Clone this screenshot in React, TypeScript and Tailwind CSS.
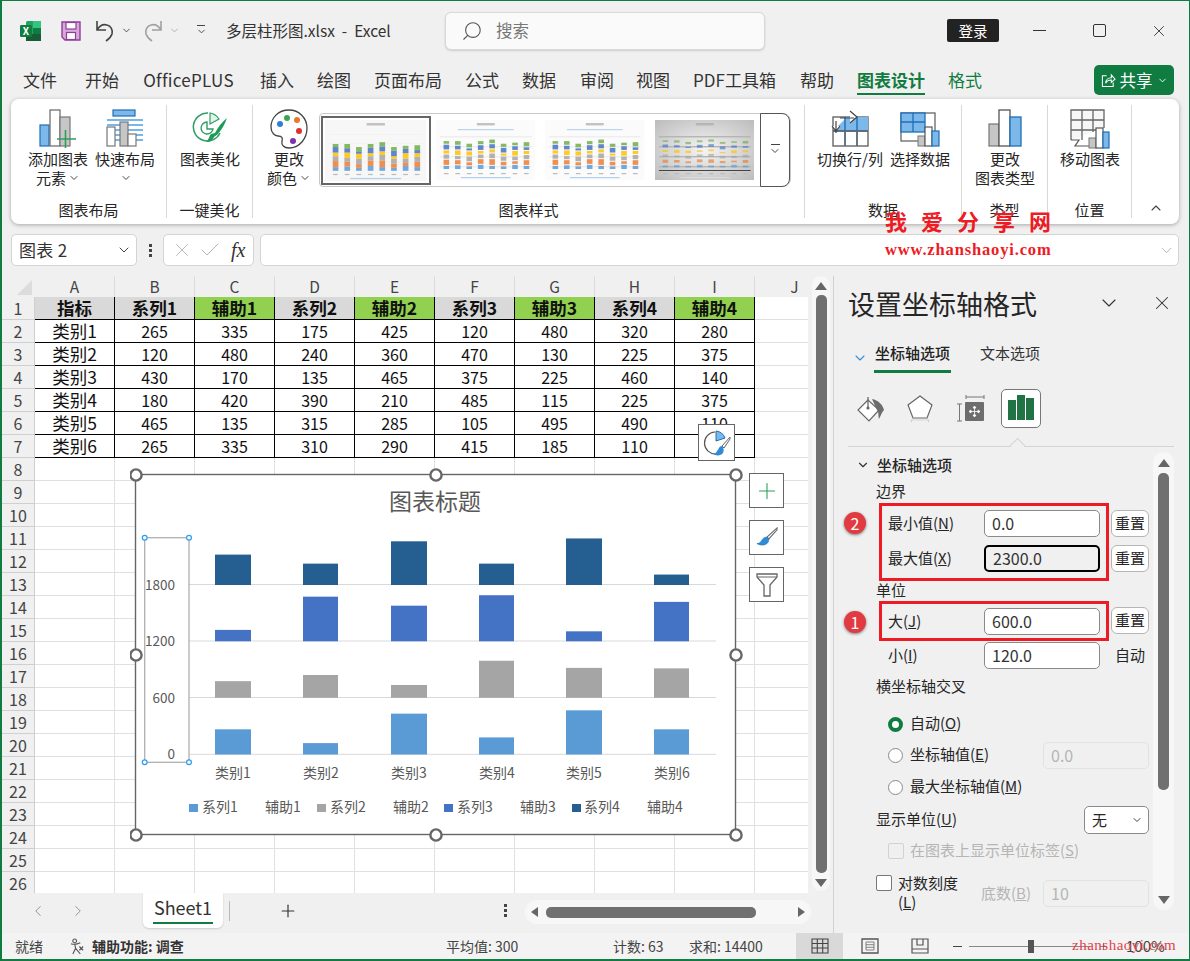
import { ChevronDown, ChevronLeft, ChevronRight, ChevronUp, Plus, Search, X, Check } from 'lucide-react';
import type { ReactNode } from 'react';

const tableHead = ['指标', '系列1', '辅助1', '系列2', '辅助2', '系列3', '辅助3', '系列4', '辅助4'];
const tableRows = [
  ['类别1', '265', '335', '175', '425', '120', '480', '320', '280'],
  ['类别2', '120', '480', '240', '360', '470', '130', '225', '375'],
  ['类别3', '430', '170', '135', '465', '375', '225', '460', '140'],
  ['类别4', '180', '420', '390', '210', '485', '115', '225', '375'],
  ['类别5', '465', '135', '315', '285', '105', '495', '490', '110'],
  ['类别6', '265', '335', '310', '290', '415', '185', '110', '490'],
];
const colLetters = ['A', 'B', 'C', 'D', 'E', 'F', 'G', 'H', 'I', 'J'];

const tabs = [
  { t: '文件', c: 'ml-[21px] w-[34px]' },
  { t: '开始', c: 'ml-[28px] w-[33px]' },
  { t: 'OfficePLUS', c: 'ml-[25px] w-[91px] tracking-[0.3px]' },
  { t: '插入', c: 'ml-[26px] w-[34px]' },
  { t: '绘图', c: 'ml-[23px] w-[34px]' },
  { t: '页面布局', c: 'ml-[23px] w-[67px]' },
  { t: '公式', c: 'ml-[24px] w-[34px]' },
  { t: '数据', c: 'ml-[23px] w-[34px]' },
  { t: '审阅', c: 'ml-[24px] w-[33px]' },
  { t: '视图', c: 'ml-[23px] w-[34px]' },
  { t: 'PDF工具箱', c: 'ml-[23px] w-[83px]' },
  { t: '帮助', c: 'ml-[24px] w-[33px]' },
];

const series = [
  { color: '#5b9bd5', base: 754.5, values: [265, 120, 430, 180, 465, 265] },
  { color: '#a5a5a5', base: 697.8, values: [175, 240, 135, 390, 315, 310] },
  { color: '#4472c4', base: 641.3, values: [120, 470, 375, 485, 105, 415] },
  { color: '#255e91', base: 585, values: [320, 225, 460, 225, 490, 110] },
];
const barX = [215, 303, 391, 479, 566, 654];
const handles = [
  [136, 475], [436, 475], [736, 475], [136, 655], [736, 655], [136, 835], [436, 835], [736, 835],
];
const legend = [
  { t: '系列1', x: 202, sq: '#5b9bd5', sx: 189 },
  { t: '辅助1', x: 265 },
  { t: '系列2', x: 330, sq: '#a5a5a5', sx: 317 },
  { t: '辅助2', x: 393 },
  { t: '系列3', x: 457, sq: '#4472c4', sx: 444 },
  { t: '辅助3', x: 520 },
  { t: '系列4', x: 584, sq: '#255e91', sx: 572 },
  { t: '辅助4', x: 647 },
];

const ExcelLogo = () => (
  <div className="relative h-[20px] w-[21px] shrink-0">
    <svg viewBox="0 0 21 20" className="absolute inset-0 h-full w-full">
      <rect x="6" y="0" width="15" height="20" rx="1.5" fill="#21a366" />
      <rect x="13" y="0" width="8" height="7" fill="#33c481" />
      <rect x="13" y="7" width="8" height="6" fill="#107c41" />
      <rect x="6" y="13" width="15" height="7" fill="#185c37" />
      <rect x="0" y="4" width="12" height="12" rx="1.2" fill="#107c41" />
    </svg>
    <span className="absolute left-0 top-[4px] w-[12px] text-center text-[10px] font-bold leading-[12px] text-white">X</span>
  </div>
);

const SaveIcon = () => (
  <svg viewBox="0 0 20 20" className="h-[20px] w-[20px] shrink-0">
    <path d="M1 1h18v18H4l-3-3z" fill="#d8a9d8" stroke="#8f3f9b" strokeWidth="1.4" />
    <rect x="5" y="1.5" width="10" height="6.5" fill="#fff" stroke="#8f3f9b" strokeWidth="1.2" />
    <rect x="5.5" y="11.5" width="9" height="7" fill="#fff" stroke="#8f3f9b" strokeWidth="1.2" />
  </svg>
);

const UndoArrow = ({ color, flip }: { color: string; flip?: boolean }) => (
  <svg viewBox="0 0 20 22" className={`h-[22px] w-[20px] shrink-0 ${flip ? '-scale-x-100' : ''}`}>
    <path d="M2 1v9h9M2 10C5 5 9 4 12 5c4 1 6 5 5 9-1 3-3 5-6 7" fill="none" stroke={color} strokeWidth="1.6" />
  </svg>
);

const AddChartIcon = () => (
  <svg viewBox="0 0 38 40" className="h-[40px] w-[38px]">
    <rect x="1" y="16" width="9" height="21" fill="#7cb8ea" stroke="#1f6fb5" strokeWidth="1.2" />
    <rect x="11" y="1" width="10" height="36" fill="#fff" stroke="#666" strokeWidth="1.2" />
    <rect x="21" y="8" width="10" height="29" fill="#c6c6c6" stroke="#777" strokeWidth="1.2" />
    <path d="M26.5 21v18M18 30h19" stroke="#2e9e5b" strokeWidth="1.6" fill="none" />
  </svg>
);

const QuickLayoutIcon = () => (
  <svg viewBox="0 0 38 40" className="h-[40px] w-[38px]">
    <rect x="7" y="1" width="22" height="6" fill="#7cb8ea" stroke="#1f6fb5" strokeWidth="1.2" />
    <path d="M1 11h36M1 16h36M1 21h36M1 26h36M1 31h36" stroke="#4f9ede" strokeWidth="1.4" />
    <rect x="1" y="18" width="8" height="19" fill="#fff" stroke="#777" strokeWidth="1.2" />
    <rect x="14" y="13" width="8" height="24" fill="#c6c6c6" stroke="#777" strokeWidth="1.2" />
    <rect x="22" y="25" width="8" height="12" fill="#fff" stroke="#777" strokeWidth="1.2" />
  </svg>
);

const BeautifyIcon = () => (
  <svg viewBox="0 0 36 36" className="h-[36px] w-[36px]">
    <path d="M16 4a14 14 0 1 0 12 20" fill="none" stroke="#2f9e63" strokeWidth="1.5" />
    <path d="M15 13a6 6 0 1 0 6 7h-6z" fill="none" stroke="#2f9e63" strokeWidth="1.4" />
    <path d="M18 4a13 13 0 0 1 9 6l-9 5z" fill="#e3f3ea" stroke="#2f9e63" strokeWidth="1.2" />
    <path d="M35 9c-2 6-5 11-9 16l-4 3c-1 3-4 5-8 5 3-2 3-6 5-8l4-1c3-6 7-11 12-15z" fill="#1f9a5a" />
  </svg>
);

const PaletteIcon = () => (
  <svg viewBox="0 0 38 40" className="h-[40px] w-[38px]">
    <path
      d="M19 1C8 1 1 9 1 18c0 6 4 9 7 9 4 0 5 2 4 5-1 4 2 7 7 7 11 0 18-10 18-20S29 1 19 1z"
      fill="#fff"
      stroke="#444"
      strokeWidth="1.3"
    />
    <circle cx="10" cy="15" r="3" fill="#2f7fd1" />
    <circle cx="17" cy="9" r="3" fill="#3aa655" />
    <circle cx="27" cy="11" r="3" fill="#e8782a" />
    <circle cx="29" cy="22" r="3" fill="#e02f2f" />
    <circle cx="23" cy="32" r="3" fill="#7c35a8" />
  </svg>
);

const SwitchIcon = () => (
  <svg viewBox="0 0 38 38" className="h-[38px] w-[38px]">
    <rect x="2" y="8" width="35" height="29" fill="#fff" stroke="#666" strokeWidth="1.4" />
    <path d="M2 37V22L16 8h21v14H2z" fill="#7cb8ea" />
    <path d="M2 22h35M14 8v29M26 8v29" stroke="#1f6fb5" strokeWidth="1.4" />
    <path d="M2 22h35M14 22v15M26 22v15" stroke="#666" strokeWidth="1.3" />
    <path d="M5 24V12M1 17l4 5 4-5M9 9h14M19 2l7 6-7 6" fill="#fff" stroke="#444" strokeWidth="1.2" />
  </svg>
);

const SelectDataIcon = () => (
  <svg viewBox="0 0 40 38" className="h-[38px] w-[40px]">
    <rect x="1" y="4" width="34" height="28" fill="#fff" stroke="#666" strokeWidth="1.3" />
    <rect x="1" y="4" width="24" height="19" fill="#7cb8ea" stroke="#1f6fb5" strokeWidth="1.3" />
    <path d="M13 4v19M1 13h24" stroke="#1f6fb5" strokeWidth="1.3" />
    <rect x="18" y="27" width="7" height="10" fill="#c6c6c6" stroke="#777" />
    <rect x="25" y="18" width="7" height="19" fill="#fff" stroke="#555" strokeWidth="1.2" />
    <rect x="32" y="22" width="7" height="15" fill="#7cb8ea" stroke="#1f6fb5" strokeWidth="1.2" />
  </svg>
);

const ChangeTypeIcon = () => (
  <svg viewBox="0 0 34 38" className="h-[38px] w-[34px]">
    <rect x="1" y="15" width="10" height="22" fill="#c6c6c6" stroke="#777" strokeWidth="1.2" />
    <rect x="11" y="1" width="11" height="36" fill="#fff" stroke="#555" strokeWidth="1.3" />
    <rect x="22" y="8" width="11" height="29" fill="#7cb8ea" stroke="#1f6fb5" strokeWidth="1.3" />
  </svg>
);

const MoveChartIcon = () => (
  <svg viewBox="0 0 40 40" className="h-[40px] w-[40px]">
    <path d="M1 31V1h33v18M1 11h33M1 21h26M12 1v30M23 1v22" fill="#f7f7f7" stroke="#666" strokeWidth="1.3" />
    <path d="M1 31h8l-4 6h14" fill="#fff" stroke="#555" strokeWidth="1.2" />
    <rect x="19" y="29" width="7" height="10" fill="#c6c6c6" stroke="#777" />
    <rect x="26" y="19" width="7" height="20" fill="#fff" stroke="#555" strokeWidth="1.2" />
    <rect x="33" y="23" width="6" height="16" fill="#7cb8ea" stroke="#1f6fb5" strokeWidth="1.2" />
  </svg>
);

const BrushIcon = ({ className }: { className?: string }) => (
  <svg viewBox="0 0 24 24" className={className}>
    <path d="M23 1 12 11l2 2L23 3z" fill="#fff" stroke="#666" strokeWidth="1.1" />
    <path d="M12 11c-3 0-5 2-6 4s-3 3-5 3c3 2 9 3 12-1 1-2 1-3 1-4z" fill="#2f8ad8" stroke="#1f6fb5" strokeWidth="0.6" />
  </svg>
);

const FillIcon = () => (
  <svg viewBox="0 0 28 26" className="h-[26px] w-[28px]">
    <path d="M11 4 1 14l11 11 10-11z" fill="#fff" stroke="#666" strokeWidth="1.2" />
    <path d="M11 1v10" stroke="#666" strokeWidth="1.3" />
    <circle cx="11" cy="12" r="1.6" fill="#666" />
    <path d="M15 3c6 1 11 6 12 11-2 2-3 5-5 9-1-4 0-7-2-9z" fill="#6d6d6d" />
  </svg>
);

const PentagonIcon = () => (
  <svg viewBox="0 0 26 28" className="h-[28px] w-[26px]">
    <path d="m13 1 12 9-5 13H6L1 10z" fill="#fff" stroke="#666" strokeWidth="1.2" />
    <path d="m6 23-2 4M20 23l2 4" stroke="#ccc" strokeWidth="1.2" />
    <path d="M6 24h14l1 2H5z" fill="#e4e4e4" />
  </svg>
);

const SizeIcon = () => (
  <svg viewBox="0 0 28 28" className="h-[28px] w-[28px]">
    <path d="M9 2h18M9 0v4M27 0v4M0 9h5M0 26h5M2.5 9v17" stroke="#777" strokeWidth="1" fill="none" />
    <rect x="8" y="7" width="19" height="19" rx="1" fill="#6d6d6d" />
    <path d="M12 16.5h11M17.5 11v11M12 16.5l2-1.5v3zM23 16.5l-2-1.5v3zM17.5 11l-1.5 2h3zM17.5 22l-1.5-2h3z" stroke="#fff" strokeWidth="0.8" fill="#fff" />
  </svg>
);

const RibbonButton = ({ icon, lines, w, className }: { icon: ReactNode; lines: ReactNode[]; w: string; className?: string }) => (
  <div className={`flex flex-col items-center pt-[4px] ${w} ${className ?? ''}`}>
    <div className="flex h-[40px] items-start justify-center">{icon}</div>
    {lines.map((line, i) => (
      <div key={i} className="flex h-[19px] items-center whitespace-nowrap text-[15px] leading-[19px] text-[#262626]">
        {line}
      </div>
    ))}
  </div>
);

const Group = ({ label, w, children }: { label: string; w: string; children: ReactNode }) => (
  <div className={`flex shrink-0 flex-col border-r border-[#d8d8d8] ${w}`}>
    <div className="flex">{children}</div>
    <div className="mt-auto h-[16px] text-center text-[15px] leading-[16px] text-[#262626]">{label}</div>
  </div>
);

const thumbBars = [
  [6, 10, 8, 6, 9, 5],
  [7, 8, 6, 9, 7, 7],
  [5, 6, 9, 8, 4, 7],
  [8, 9, 7, 5, 9, 6],
  [6, 11, 9, 6, 8, 7],
  [5, 7, 8, 4, 9, 6],
  [8, 5, 7, 9, 7, 5],
  [6, 9, 8, 6, 5, 8],
];
const thumbColors = ['#5b9bd5', '#ed7d31', '#a5a5a5', '#ffc000', '#4472c4', '#70ad47'];

const Thumb = ({ variant, className }: { variant: 1 | 2 | 3 | 4; className: string }) => {
  const gap = variant === 4 ? 2.6 : variant === 1 ? 0 : 1;
  const scale = variant === 1 ? 0.6 : variant === 4 ? 0.32 : 0.52;
  return (
    <svg viewBox="0 0 100 60" preserveAspectRatio="none" className={className}>
      <defs>
        <radialGradient id="thumbGrey" cx="50%" cy="50%" r="70%">
          <stop offset="0%" stopColor="#f4f4f4" />
          <stop offset="100%" stopColor="#bcbcbc" />
        </radialGradient>
      </defs>
      <rect width="100" height="60" fill={variant === 4 ? 'url(#thumbGrey)' : variant === 1 ? '#f7f7f7' : '#fbfbfb'} />
      <rect x="41" y="3" width="18" height="2.4" fill="#aaa" opacity="0.7" />
      {variant !== 1 && variant !== 4 && <rect x="22" y="9" width="56" height="1.2" fill="#9ec4e6" opacity="0.7" />}
      {(variant === 1 ? [14, 23, 32, 41] : [16, 26, 36, 46]).map((y) => (
        <rect key={y} x="4" y={y} width="92" height={variant === 1 ? 0.5 : 1.4} fill={variant === 4 ? '#b5b5b5' : '#eeeeee'} />
      ))}
      {variant === 4 && <rect x="4" y="50" width="92" height="1" fill="#444" />}
      {thumbBars.map((col, i) => {
        let y = 50;
        return (
          <g key={i}>
            {col.map((h, j) => {
              const hh = h * scale;
              y -= hh + gap;
              return (
                <rect key={j} x={7.6 + i * 11.5} y={y} width="5.6" height={hh} fill={thumbColors[j]} opacity={variant === 4 ? 0.65 : 0.85} />
              );
            })}
            <rect x={8 + i * 11.5} y="53" width="4.6" height="1.2" fill="#bbb" />
          </g>
        );
      })}
      <rect x="25" y="57" width="50" height="1.2" fill={variant === 4 ? '#ddd' : '#9ec4e6'} opacity="0.8" />
    </svg>
  );
};

const Chevron = ({ className }: { className?: string }) => (
  <ChevronDown className={className ?? 'ml-[2px] h-[12px] w-[12px]'} strokeWidth={2} color="#444" />
);

const Ribbon = () => (
  <div className="ml-[9px] flex h-[125px] w-[1168px] rounded-[8px] bg-white py-[6px] shadow-[0_1px_4px_rgba(0,0,0,0.3)]">
    <Group label="图表布局" w="w-[156px]">
      <RibbonButton w="w-[60px]" className="ml-[17px]" icon={<AddChartIcon />} lines={['添加图表', <>元素<Chevron /></>]} />
      <RibbonButton w="w-[60px]" className="ml-[7px]" icon={<QuickLayoutIcon />} lines={['快速布局', <Chevron />]} />
    </Group>
    <Group label="一键美化" w="w-[86px]">
      <RibbonButton w="w-[60px]" className="ml-[13px]" icon={<BeautifyIcon />} lines={['图表美化']} />
    </Group>
    <Group label="图表样式" w="w-[552px]">
      <RibbonButton w="w-[48px]" className="ml-[12px]" icon={<PaletteIcon />} lines={['更改', <>颜色<Chevron /></>]} />
      <div className="ml-[6px] mt-[8px] flex h-[74px] w-[472px] items-center rounded-l-[4px] rounded-r-[8px] border border-[#c8c8c8] bg-white">
        <div className="ml-[1px] flex h-[69px] w-[110px] border-2 border-[#666] bg-white p-[2px]">
          <Thumb variant={1} className="h-full w-full" />
        </div>
        <Thumb variant={2} className="ml-[5px] h-[60px] w-[100px]" />
        <Thumb variant={3} className="ml-[10px] h-[60px] w-[100px]" />
        <Thumb variant={4} className="ml-[10px] h-[60px] w-[100px]" />
        <div className="ml-[6px] flex h-[74px] w-[30px] flex-col items-center justify-center rounded-r-[8px] border border-[#555] bg-white">
          <div className="h-[1px] w-[9px] bg-[#444]" />
          <ChevronDown className="h-[12px] w-[12px]" color="#444" />
        </div>
      </div>
    </Group>
    <Group label="数据" w="w-[157px]">
      <RibbonButton w="w-[66px]" className="ml-[12px]" icon={<SwitchIcon />} lines={['切换行/列']} />
      <RibbonButton w="w-[60px]" className="ml-[7px]" icon={<SelectDataIcon />} lines={['选择数据']} />
    </Group>
    <Group label="类型" w="w-[86px]">
      <RibbonButton w="w-[60px]" className="ml-[13px]" icon={<ChangeTypeIcon />} lines={['更改', '图表类型']} />
    </Group>
    <Group label="位置" w="w-[84px]">
      <RibbonButton w="w-[60px]" className="ml-[12px]" icon={<MoveChartIcon />} lines={['移动图表']} />
    </Group>
    <div className="flex flex-1 items-end justify-center pb-[2px]">
      <ChevronUp className="h-[16px] w-[16px]" color="#444" strokeWidth={1.6} />
    </div>
  </div>
);

const SheetCell = ({ children, kind, wide }: { children?: ReactNode; kind?: 'head' | 'aid' | 'data'; wide?: boolean }) => {
  const dark = kind ? 'border-black' : 'border-[#e0e0e0]';
  const fill = kind === 'head' ? 'bg-[#d9d9d9] font-bold' : kind === 'aid' ? 'bg-[#92d050] font-bold' : 'bg-white';
  const size = wide ? 'text-[17.5px]' : 'text-[16px]';
  return (
    <div className={`flex h-[23px] w-[80px] shrink-0 items-center justify-center border-b border-r leading-none text-[#111] ${size} ${dark} ${fill}`}>
      {children}
    </div>
  );
};

const Sheet = () => (
  <div className="h-[617px] w-[806px] shrink-0 overflow-hidden">
    <div className="flex h-[21px] bg-[#f0f0f0]">
      <div className="flex w-[33px] shrink-0 items-end justify-end pb-[2px] pr-[3px]">
        <svg viewBox="0 0 15 15" className="h-[15px] w-[15px]">
          <path d="M15 0v15H0z" fill="#dcdcdc" />
        </svg>
      </div>
      {colLetters.map((c) => (
        <div key={c} className="flex h-[21px] w-[80px] shrink-0 items-center justify-center border-r border-[#dcdcdc] text-[15.5px] leading-none text-[#444]">
          {c}
        </div>
      ))}
    </div>
    {Array.from({ length: 26 }, (_, r) => {
      const row = r === 0 ? tableHead : tableRows[r - 1];
      return (
        <div key={r} className="flex h-[23px]">
          <div className="flex w-[33px] shrink-0 items-center justify-center border-b border-r border-[#cfcfcf] bg-[#f0f0f0] text-[16px] leading-none text-[#444]">
            {r + 1}
          </div>
          {colLetters.map((_, c) => {
            if (!row || c > 8) return <SheetCell key={c} />;
            const kind = r === 0 ? (c > 0 && c % 2 === 0 ? 'aid' : 'head') : 'data';
            return (
              <SheetCell key={c} kind={kind} wide={r === 0 || c === 0}>
                {row[c]}
              </SheetCell>
            );
          })}
        </div>
      );
    })}
  </div>
);

const ChartObject = () => (
  <svg
    viewBox="130 468 616 376"
    className="absolute left-[128px] top-[467px] h-[376px] w-[616px]"
    fontFamily="'Noto Sans CJK SC', sans-serif"
  >
    <rect x="135.5" y="474.5" width="600" height="360" fill="#fff" stroke="#666" strokeWidth="1.4" />
    <text x="435" y="510" textAnchor="middle" fontSize="23" fill="#595959">图表标题</text>
    {[584.5, 641, 697.5, 754.3].map((y) => (
      <line key={y} x1="189" x2="716" y1={y} y2={y} stroke="#d9d9d9" strokeWidth="1" />
    ))}
    {series.map((s) =>
      s.values.map((v, i) => {
        const h = v * 0.095;
        return <rect key={`${s.color}-${i}`} x={barX[i]} y={s.base - h} width={i % 2 ? 35 : 36} height={h} fill={s.color} />;
      }),
    )}
    <rect x="144.7" y="537.7" width="44.3" height="224.6" fill="none" stroke="#b0b0b0" strokeWidth="1.3" />
    {[[144.7, 537.7], [189, 537.7], [144.7, 762.3], [189, 762.3]].map(([x, y]) => (
      <circle key={`${x}-${y}`} cx={x} cy={y} r="2.4" fill="#fff" stroke="#2e9bf0" strokeWidth="1.2" />
    ))}
    {[['1800', 590], ['1200', 646], ['600', 703], ['0', 759]].map(([t, y]) => (
      <text key={t} x="175" y={y} textAnchor="end" fontSize="13.5" fill="#595959">{t}</text>
    ))}
    {barX.map((x, i) => (
      <text key={x} x={x + 18} y="778" textAnchor="middle" fontSize="14" fill="#595959">{`类别${i + 1}`}</text>
    ))}
    {legend.map((l) => (
      <g key={l.t}>
        {l.sq && <rect x={l.sx} y="804" width="9" height="8" fill={l.sq} />}
        <text x={l.x} y="812" fontSize="14" fill="#595959">{l.t}</text>
      </g>
    ))}
    {handles.map(([x, y]) => (
      <circle key={`${x}-${y}`} cx={x} cy={y} r="5.6" fill="#fff" stroke="#666" strokeWidth="2.4" />
    ))}
  </svg>
);

const FloatButton = ({ className, children }: { className: string; children: ReactNode }) => (
  <div className={`absolute flex items-center justify-center border border-[#666] bg-white ${className}`}>{children}</div>
);

const ScrollArrow = ({ up }: { up?: boolean }) => (
  <svg viewBox="0 0 12 8" className="h-[8px] w-[12px] shrink-0">
    <path d={up ? 'M6 0l6 8H0z' : 'M0 0h12L6 8z'} fill="#666" />
  </svg>
);

const Field = ({ value, w = 'w-[116px]', focus, muted }: { value: string; w?: string; focus?: boolean; muted?: boolean }) => (
  <div
    className={`flex h-[27px] shrink-0 items-center rounded-[5px] pb-[1px] pl-[7px] text-[16px] ${w} ${
      focus
        ? 'border-2 border-black bg-[#f0f0f0] text-[#333]'
        : muted
          ? 'border border-[#e2e2e2] bg-[#f0f0f0] text-[#b5b5b5]'
          : 'border border-[#8a8a8a] bg-white text-[#333]'
    }`}
  >
    {value}
  </div>
);

const ResetButton = () => (
  <div className="flex h-[27px] w-[38px] shrink-0 items-center justify-center rounded-[6px] border border-[#b5b5b5] bg-white text-[15px] text-[#262626]">
    重置
  </div>
);

const Hotkey = ({ label, k, className }: { label: string; k: string; className?: string }) => (
  <span className={`inline-block whitespace-nowrap pb-[2px] text-[15px] ${className ?? 'text-[#262626]'}`}>
    {label}(<span className="underline">{k}</span>)
  </span>
);

const Badge = ({ n, className }: { n: number; className: string }) => (
  <div className={`absolute flex h-[22px] w-[22px] items-center justify-center rounded-full bg-[#e13b41] text-[16px] text-white shadow-[0_1px_3px_rgba(0,0,0,0.5)] ${className}`}>
    {n}
  </div>
);

const Radio = ({ on }: { on?: boolean }) =>
  on ? (
    <div className="h-[15px] w-[15px] shrink-0 rounded-full border-[4px] border-[#107c41] bg-white" />
  ) : (
    <div className="h-[15px] w-[15px] shrink-0 rounded-full border border-[#8a8a8a] bg-white" />
  );

const FormatPane = () => (
  <div className="relative flex-1 border-l border-[#d0d0d0] bg-[#f0f0f0]">
    <div className="flex h-[54px] items-center pl-[14px]">
      <div className="whitespace-nowrap text-[27px] leading-none text-[#262626]">设置坐标轴格式</div>
      <ChevronDown className="ml-[60px] h-[24px] w-[24px]" strokeWidth={1.1} color="#333" />
      <X className="ml-[30px] h-[22px] w-[22px]" strokeWidth={1.1} color="#333" />
    </div>
    <div className="ml-[18px] mt-[7px] flex h-[36px] items-start">
      <ChevronDown className="mt-[13px] h-[16px] w-[16px]" strokeWidth={1.6} color="#2e8fd8" />
      <div className="ml-[6px] h-[36px] w-[77px] border-b-[3px] border-[#107c41] pt-[6px] text-center text-[15px] font-medium leading-[20px] text-[#222]">
        坐标轴选项
      </div>
      <div className="ml-[29px] pt-[6px] text-[15px] leading-[20px] text-[#333]">文本选项</div>
    </div>
    <div className="ml-[14px] mt-[16px] flex h-[39px] items-center">
      <div className="ml-[9px] flex w-[28px] justify-center"><FillIcon /></div>
      <div className="ml-[22px] flex w-[26px] justify-center"><PentagonIcon /></div>
      <div className="ml-[24px] flex w-[28px] justify-center"><SizeIcon /></div>
      <div className="ml-[16px] flex h-[39px] w-[40px] items-end justify-center gap-[1px] rounded-[5px] border border-[#777] bg-white pb-[7px]">
        <div className="h-[20px] w-[8px] bg-[#217346]" />
        <div className="h-[25px] w-[8px] bg-[#217346]" />
        <div className="h-[22px] w-[8px] bg-[#217346]" />
      </div>
    </div>
    <div className="relative ml-[14px] mt-[18px] h-[1px] w-[326px] bg-[#d4d4d4]">
      <div className="absolute left-[164px] top-[-6px] h-[11px] w-[11px] rotate-45 border-l border-t border-[#d4d4d4] bg-[#f0f0f0]" />
    </div>

    <div className="flex pl-[14px]">
      <div className="w-[301px] shrink-0">
        <div className="mt-[8px] flex h-[20px] items-center">
          <ChevronDown className="ml-[8px] h-[14px] w-[14px]" strokeWidth={2} color="#333" />
          <span className="ml-[7px] text-[15px] font-medium text-[#262626]">坐标轴选项</span>
        </div>
        <div className="ml-[28px] mt-[7px] h-[20px] text-[15px] leading-[18px] text-[#262626]">边界</div>
        <div className="relative mt-[1px] flex">
          <Badge n={2} className="left-[-4px] top-[9px]" />
          <div className="ml-[31px] flex h-[78px] w-[230px] flex-col gap-[8px] border-[3px] border-[#ed1c24] pt-[4px]">
            <div className="flex items-center">
              <span className="ml-[6px] w-[96px]"><Hotkey label="最小值" k="N" /></span>
              <Field value="0.0" />
            </div>
            <div className="flex items-center">
              <span className="ml-[6px] w-[96px]"><Hotkey label="最大值" k="X" /></span>
              <Field value="2300.0" focus />
            </div>
          </div>
          <div className="ml-[2px] flex flex-col gap-[8px] pt-[7px]">
            <ResetButton />
            <ResetButton />
          </div>
        </div>
        <div className="ml-[28px] h-[19px] text-[15px] leading-[17px] text-[#262626]">单位</div>
        <div className="relative mt-[1px] flex">
          <Badge n={1} className="left-[-4px] top-[10px]" />
          <div className="ml-[31px] flex h-[40px] w-[230px] items-center border-[3px] border-[#ed1c24]">
            <span className="ml-[6px] w-[96px]"><Hotkey label="大" k="J" /></span>
            <Field value="600.0" />
          </div>
          <div className="ml-[2px] pt-[6px]"><ResetButton /></div>
        </div>
        <div className="mt-[1px] flex h-[27px] items-center">
          <span className="ml-[40px] w-[96px]"><Hotkey label="小" k="I" /></span>
          <Field value="120.0" />
          <span className="ml-[15px] text-[15px] text-[#262626]">自动</span>
        </div>
        <div className="ml-[28px] mt-[8px] h-[20px] text-[15px] leading-[18px] text-[#262626]">横坐标轴交叉</div>
        <div className="ml-[40px] mt-[15px] flex h-[24px] items-center gap-[7px]">
          <Radio on />
          <Hotkey label="自动" k="O" />
        </div>
        <div className="ml-[40px] mt-[5px] flex h-[28px] items-center gap-[7px]">
          <Radio />
          <Hotkey label="坐标轴值" k="E" />
          <Field value="0.0" w="ml-auto w-[106px]" muted />
        </div>
        <div className="ml-[40px] mt-[6px] flex h-[24px] items-center gap-[7px]">
          <Radio />
          <Hotkey label="最大坐标轴值" k="M" />
        </div>
        <div className="ml-[28px] mt-[7px] flex h-[28px] items-center">
          <Hotkey label="显示单位" k="U" />
          <div className="ml-auto flex h-[28px] w-[65px] items-center justify-between rounded-[5px] border border-[#8a8a8a] bg-white pl-[7px] pr-[5px] text-[15px] text-[#262626]">
            无
            <Chevron />
          </div>
        </div>
        <div className="ml-[40px] mt-[8px] flex h-[18px] items-center gap-[6px]">
          <div className="h-[16px] w-[16px] rounded-[2px] border border-[#d2d2d2]" />
          <Hotkey label="在图表上显示单位标签" k="S" className="text-[#b5b5b5]" />
        </div>
        <div className="ml-[28px] mt-[15px] flex h-[36px]">
          <div className="h-[16px] w-[16px] shrink-0 rounded-[2px] border border-[#777] bg-white" />
          <div className="-mt-[2px] ml-[6px] w-[62px] text-[15px] leading-[19px] text-[#262626]">
            对数刻度
            <br />
            (<span className="underline">L</span>)
          </div>
          <div className="ml-[21px] flex h-[36px] items-center pt-[2px]">
            <Hotkey label="底数" k="B" className="text-[#b5b5b5]" />
          </div>
          <div className="ml-auto pt-[5px]"><Field value="10" w="w-[106px]" muted /></div>
        </div>
      </div>
      <div className="ml-[4px] mt-[5px] flex h-[458px] w-[21px] flex-col items-center rounded-[10px] bg-[#f7f7f7] pt-[7px]">
        <ScrollArrow up />
        <div className="mt-[6px] h-[317px] w-[11px] rounded-[5px] bg-[#707070]" />
        <div className="mb-[6px] mt-auto"><ScrollArrow /></div>
      </div>
    </div>
  </div>
);

const StatusBar = () => (
  <div className="flex h-[26px] items-center bg-[#f3f3f3] text-[14px] text-[#444]">
    <span className="ml-[13px] w-[55px]">就绪</span>
    <div className="flex w-[376px] items-center">
      <svg viewBox="0 0 16 18" className="h-[17px] w-[15px]">
        <circle cx="5" cy="3" r="2" fill="none" stroke="#555" strokeWidth="1.2" />
        <path d="M1 6c3 1 6 1 10-1M5 6l1 5-3 6M6 11l5 6M10 9l4 4M14 9l-4 4" fill="none" stroke="#555" strokeWidth="1.2" />
      </svg>
      <span className="ml-[7px] text-[14px] font-bold text-[#333]">辅助功能: 调查</span>
    </div>
    <span className="w-[167px]">平均值: 300</span>
    <span className="w-[76px]">计数: 63</span>
    <span className="w-[107px]">求和: 14400</span>
    <div className="flex h-full w-[47px] items-center justify-center bg-[#d9d9d9]">
      <svg viewBox="0 0 18 16" className="h-[16px] w-[18px]">
        <path d="M1 1h16v14H1zM1 5.5h16M1 10h16M6.3 1v14M11.7 1v14" fill="none" stroke="#444" strokeWidth="1.1" />
      </svg>
    </div>
    <div className="ml-[2px] flex w-[50px] justify-center">
      <svg viewBox="0 0 18 16" className="h-[16px] w-[18px]">
        <path d="M1 1h16v14H1z" fill="none" stroke="#555" strokeWidth="1.3" />
        <path d="M5 4h8v8H5zM5 6.7h8M5 9.3h8" fill="none" stroke="#777" strokeWidth="0.9" />
      </svg>
    </div>
    <div className="flex w-[50px] justify-center">
      <svg viewBox="0 0 18 16" className="h-[16px] w-[18px]">
        <path d="M1 1h16v14H1zM6 1v6h6V1M1 11h16" fill="none" stroke="#555" strokeWidth="1.2" />
      </svg>
    </div>
    <div className="flex w-[24px] justify-center"><div className="h-[1px] w-[9px] bg-[#444]" /></div>
    <div className="relative h-[1px] w-[122px] bg-[#888]">
      <div className="absolute left-[59px] top-[-6px] h-[13px] w-[6px] bg-[#555]" />
    </div>
    <div className="flex w-[24px] justify-center"><Plus className="h-[11px] w-[11px]" strokeWidth={1.4} color="#444" /></div>
    <span className="ml-[11px] text-[15px]">100%</span>
  </div>
);

export default function App() {
  return (
    <div className="relative h-[961px] w-[1190px] overflow-hidden border-b-2 border-l-2 border-r border-t border-[#107c41] bg-[#f0f0f0] font-['Noto_Sans_CJK_SC','Noto_Sans',sans-serif]">
      {/* title bar */}
      <div className="flex h-[59px] items-center text-[#444]">
        <div className="ml-[18px]"><ExcelLogo /></div>
        <div className="ml-[20px]"><SaveIcon /></div>
        <div className="ml-[14px]"><UndoArrow color="#444" /></div>
        <Chevron className="ml-[6px] h-[11px] w-[11px]" />
        <div className="ml-[11px]"><UndoArrow color="#a0a0a0" flip /></div>
        <ChevronDown className="ml-[6px] h-[11px] w-[11px]" color="#aaa" />
        <div className="ml-[15px] flex w-[12px] flex-col items-center">
          <div className="h-[1px] w-[8px] bg-[#444]" />
          <Chevron className="h-[11px] w-[11px]" />
        </div>
        <span className="ml-[19px] w-[219px] whitespace-nowrap text-[15.5px] text-[#333]">多层柱形图.xlsx&nbsp; -&nbsp; Excel</span>
        <div className="flex h-[38px] w-[320px] items-center rounded-[6px] border border-[#d8d8d8] bg-[#fafafa] pl-[15px] shadow-[0_1px_2px_rgba(0,0,0,0.15)]">
          <Search className="h-[22px] w-[22px] -scale-x-100" strokeWidth={1.2} color="#555" />
          <span className="ml-[13px] text-[16.5px] text-[#777]">搜索</span>
        </div>
        <div className="ml-[182px] flex h-[23px] w-[52px] items-center justify-center rounded-[2px] bg-[#222] text-[14.5px] text-white">登录</div>
        <div className="ml-[34px] h-[1px] w-[13px] bg-[#333]" />
        <div className="ml-[47px] h-[13px] w-[13px] rounded-[2px] border border-[#333]" />
        <X className="ml-[44px] h-[18px] w-[18px]" strokeWidth={1.2} color="#333" />
      </div>

      {/* tabs */}
      <div className="flex h-[39px] items-start text-[17px] text-[#333]">
        {tabs.map((tab) => (
          <div key={tab.t} className={`h-[35px] whitespace-nowrap pt-[8px] text-center leading-[24px] ${tab.c}`}>
            {tab.t}
          </div>
        ))}
        <div className="ml-[24px] h-[35px] w-[68px] whitespace-nowrap border-b-2 border-[#107c41] pt-[8px] text-center font-bold leading-[24px] text-[#107c41]">
          图表设计
        </div>
        <div className="ml-[23px] h-[35px] w-[34px] pt-[8px] text-center leading-[24px] text-[#107c41]">格式</div>
        <div className="ml-auto mr-[15px] mt-[5px] flex h-[30px] w-[80px] items-center justify-center gap-[4px] rounded-[5px] bg-[#107c41] text-white">
          <svg viewBox="0 0 16 16" className="h-[15px] w-[15px]">
            <path d="M6 3H1.5v11.5H13V10" fill="none" stroke="#fff" strokeWidth="1.1" />
            <path d="M5 11c0-4 3-6 6-6V2l4 4.5L11 10V7.5c-3 0-5 1-6 3.5z" fill="none" stroke="#fff" strokeWidth="1.1" />
          </svg>
          <span className="text-[16.5px]">共享</span>
          <ChevronDown className="h-[11px] w-[11px]" color="#fff" strokeWidth={2} />
        </div>
      </div>

      <Ribbon />

      {/* formula bar */}
      <div className="ml-[9px] mt-[10px] flex h-[32px] items-stretch">
        <div className="flex w-[126px] items-center justify-between rounded-[5px] border border-[#d4d4d4] bg-white pl-[7px] pr-[4px] text-[17px] text-[#333]">
          <span className="tracking-[0.3px]">图表 2</span>
          <ChevronDown className="h-[16px] w-[16px]" strokeWidth={1.5} color="#444" />
        </div>
        <div className="flex w-[26px] flex-col items-center justify-center gap-[2px]">
          <div className="h-[3px] w-[3px] bg-[#444]" />
          <div className="h-[3px] w-[3px] bg-[#444]" />
          <div className="h-[3px] w-[3px] bg-[#444]" />
        </div>
        <div className="flex w-[91px] items-center rounded-[5px] border border-[#d4d4d4] bg-white pl-[7px]">
          <X className="h-[22px] w-[22px]" strokeWidth={1} color="#b5b5b5" />
          <Check className="ml-[5px] h-[24px] w-[24px]" strokeWidth={1} color="#b5b5b5" />
          <span className="ml-[9px] font-['Liberation_Serif',serif] text-[20px] italic text-[#333]">fx</span>
        </div>
        <div className="ml-[6px] flex w-[919px] items-center justify-end rounded-[5px] border border-[#d4d4d4] bg-white pr-[3px]">
          <ChevronDown className="h-[17px] w-[17px]" strokeWidth={1.2} color="#aaa" />
        </div>
      </div>

      {/* sheet and pane */}
      <div className="mt-[10px] flex h-[657px]">
        <div className="flex w-[831px] shrink-0 flex-col">
          <div className="flex h-[617px]">
            <Sheet />
            <div className="ml-[4px] flex h-[615px] w-[18px] flex-col items-center rounded-[9px] bg-[#f7f7f7] pt-[6px]">
              <ScrollArrow up />
              <div className="mt-[5px] h-[578px] w-[11px] rounded-[5px] bg-[#707070]" />
              <div className="mb-[4px] mt-auto"><ScrollArrow /></div>
            </div>
          </div>
          <div className="flex h-[40px] items-start">
            <ChevronLeft className="ml-[27px] mt-[9px] h-[18px] w-[18px]" strokeWidth={1.2} color="#888" />
            <ChevronRight className="ml-[22px] mt-[9px] h-[18px] w-[18px]" strokeWidth={1.2} color="#888" />
            <div className="ml-[56px] flex h-[35px] w-[80px] flex-col items-center rounded-b-[6px] bg-white pt-[2px] shadow-[0_1px_2px_rgba(0,0,0,0.15)]">
              <span className="text-[18px] leading-[24px] text-[#333]">Sheet1</span>
              <div className="mt-[3px] h-[2px] w-[60px] bg-[#107c41]" />
            </div>
            <div className="ml-[6px] mt-[8px] h-[20px] w-[1px] bg-[#bbb]" />
            <Plus className="ml-[48px] mt-[8px] h-[20px] w-[20px]" strokeWidth={1.4} color="#333" />
            <div className="ml-[206px] mt-[11px] flex flex-col gap-[2px]">
              <div className="h-[3px] w-[3px] bg-[#444]" />
              <div className="h-[3px] w-[3px] bg-[#444]" />
              <div className="h-[3px] w-[3px] bg-[#444]" />
            </div>
            <div className="ml-[18px] mt-[7px] flex h-[24px] w-[286px] items-center rounded-[12px] bg-[#f7f7f7]">
              <div className="ml-[6px] h-0 w-0 border-y-[5px] border-r-[7px] border-y-transparent border-r-[#666]" />
              <div className="ml-[8px] h-[11px] w-[210px] rounded-[5px] bg-[#707070]" />
              <div className="ml-auto mr-[6px] h-0 w-0 border-y-[5px] border-l-[7px] border-y-transparent border-l-[#666]" />
            </div>
          </div>
        </div>
        <FormatPane />
      </div>

      <StatusBar />

      {/* floating over the sheet */}
      <ChartObject />
      <FloatButton className="left-[696px] top-[423px] h-[37px] w-[37px]">
        <svg viewBox="0 0 28 28" className="h-[28px] w-[28px]">
          <path d="M12 3a11 11 0 1 0 1 22" fill="none" stroke="#555" strokeWidth="1.2" />
          <path d="M13 2a11 11 0 0 1 9 7l-9 3z" fill="#7cb8ea" stroke="#1f6fb5" strokeWidth="1" />
          <path d="M27 8 19 17l2 2 6-9z" fill="#fff" stroke="#666" strokeWidth="1" />
          <path d="M19 17c-3 0-3 3-5 5-1 2-2 3-4 3 3 2 8 2 10-1 1-2 1-5-1-7z" fill="#2f8ad8" />
        </svg>
      </FloatButton>
      <FloatButton className="left-[747px] top-[472px] h-[35px] w-[35px]">
        <Plus className="h-[26px] w-[26px]" strokeWidth={1} color="#2e9e5b" />
      </FloatButton>
      <FloatButton className="left-[747px] top-[519px] h-[35px] w-[35px]">
        <BrushIcon className="h-[22px] w-[22px]" />
      </FloatButton>
      <FloatButton className="left-[747px] top-[566px] h-[35px] w-[35px]">
        <svg viewBox="0 0 22 24" className="h-[24px] w-[22px]">
          <path d="M1 1h20v3l-7 8v11H8V12L1 4z" fill="#fff" stroke="#666" strokeWidth="1.3" />
          <path d="M1 4h20" stroke="#666" strokeWidth="1" />
        </svg>
      </FloatButton>

      {/* watermark */}
      <div className="absolute left-[883px] top-[207px] flex w-[166px] justify-between text-[22px] font-bold leading-[24px] text-[#ed1c24]">
        {['我', '爱', '分', '享', '网'].map((c) => (
          <span key={c}>{c}</span>
        ))}
      </div>
      <div className="absolute left-[883px] top-[239px] whitespace-nowrap font-['Liberation_Serif',serif] text-[16.5px] font-bold leading-[20px] tracking-[0.85px] text-[#ed1c24]">
        www.zhanshaoyi.com
      </div>
      <div className="absolute left-[1070px] top-[934px] whitespace-nowrap font-['Liberation_Serif',serif] text-[15px] leading-[20px] tracking-[0.5px] text-[#e2424a]">
        zhanshaoyi.com
      </div>
    </div>
  );
}
